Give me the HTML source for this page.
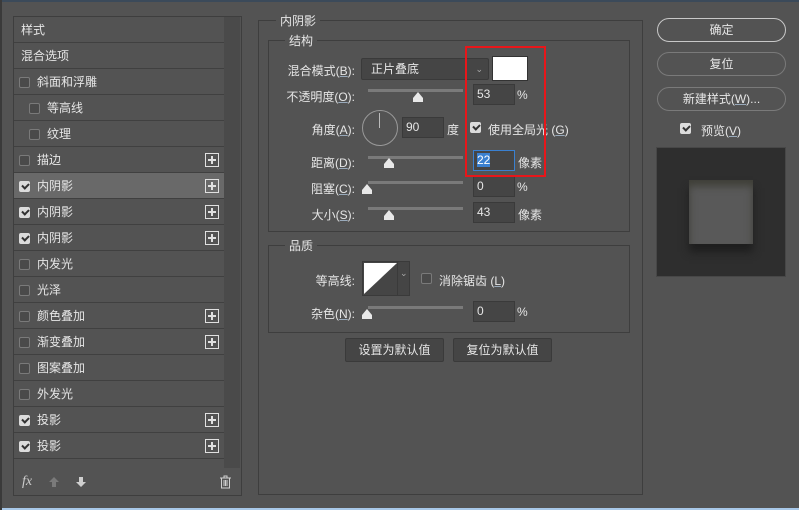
<!DOCTYPE html>
<html><head><meta charset="utf-8"><style>
*{margin:0;padding:0;box-sizing:border-box}
body{width:799px;height:510px;background:#535353;position:relative;overflow:hidden;font-family:"Liberation Sans","Noto Sans CJK SC",sans-serif;font-size:12px;color:#e6e6e6}
.a{position:absolute}
u{text-decoration-thickness:1px;text-decoration-color:#9ab}
.row{position:absolute;left:14px;width:210px;height:26px;border-bottom:1px solid #404040;line-height:27px}
.cb{position:absolute;top:8px;width:11px;height:11px;border:1px solid #7a7a7a;border-radius:2px;background:#4a4a4a}
.ck{background:#dcdcdc;border-color:#dcdcdc}
.ck::after{content:"";position:absolute;left:2px;top:1px;width:5px;height:3px;border-left:2px solid #333;border-bottom:2px solid #333;transform:rotate(-45deg)}
.plus{position:absolute;right:5px;top:6px;width:14px;height:14px;border:1px solid #e0e0e0}
.plus::before{content:"";position:absolute;left:2px;top:5px;width:8px;height:2px;background:#e0e0e0}
.plus::after{content:"";position:absolute;left:5px;top:2px;width:2px;height:8px;background:#e0e0e0}
.box{position:absolute;border:1px solid #3e3e3e}
.lbl{position:absolute;text-align:right;width:100px}
.inp{position:absolute;width:42px;height:21px;background:#454545;border:1px solid #3a3a3a;padding-left:3px;line-height:19px}
.track{position:absolute;height:3px;background:#7a7a7a;width:95px}
.thumb{position:absolute;width:0;height:0;border-left:5px solid transparent;border-right:5px solid transparent;border-bottom:6px solid #e8e8e8}
.thumb::after{content:"";position:absolute;left:-5px;top:6px;width:10px;height:4px;background:#e8e8e8}
.btn{position:absolute;left:657px;width:129px;height:24px;border:1px solid #8a8a8a;border-radius:12px;text-align:center;line-height:22px}
.btn2{position:absolute;height:24px;background:#454545;border:1px solid #3a3a3a;border-radius:2px;text-align:center;line-height:22px}
</style></head><body>
<div class="a" style="left:0;top:0;width:799px;height:2px;background:#3b4a5a"></div>
<div class="a" style="left:0;bottom:0;width:799px;height:2px;background:#a8c8e8"></div>
<div class="a" style="left:0;top:0;width:2px;height:510px;background:#3a3a3a"></div>

<div class="box" style="left:13px;top:16px;width:229px;height:480px"></div>
<div class="a" style="left:224px;top:17px;width:16px;height:451px;background:#4a4a4a"></div>

<div class="row" style="top:17px"><span style="margin-left:7px">样式</span></div>
<div class="row" style="top:43px"><span style="margin-left:7px">混合选项</span></div>
<div class="row" style="top:69px"><div class="cb" style="left:5px"></div><span style="margin-left:23px">斜面和浮雕</span></div>
<div class="row" style="top:95px"><div class="cb" style="left:15px"></div><span style="margin-left:33px">等高线</span></div>
<div class="row" style="top:121px"><div class="cb" style="left:15px"></div><span style="margin-left:33px">纹理</span></div>
<div class="row" style="top:147px"><div class="cb" style="left:5px"></div><span style="margin-left:23px">描边</span><div class="plus"></div></div>
<div class="row" style="top:173px;background:#696969"><div class="cb ck" style="left:5px"></div><span style="margin-left:23px">内阴影</span><div class="plus"></div></div>
<div class="row" style="top:199px"><div class="cb ck" style="left:5px"></div><span style="margin-left:23px">内阴影</span><div class="plus"></div></div>
<div class="row" style="top:225px"><div class="cb ck" style="left:5px"></div><span style="margin-left:23px">内阴影</span><div class="plus"></div></div>
<div class="row" style="top:251px"><div class="cb" style="left:5px"></div><span style="margin-left:23px">内发光</span></div>
<div class="row" style="top:277px"><div class="cb" style="left:5px"></div><span style="margin-left:23px">光泽</span></div>
<div class="row" style="top:303px"><div class="cb" style="left:5px"></div><span style="margin-left:23px">颜色叠加</span><div class="plus"></div></div>
<div class="row" style="top:329px"><div class="cb" style="left:5px"></div><span style="margin-left:23px">渐变叠加</span><div class="plus"></div></div>
<div class="row" style="top:355px"><div class="cb" style="left:5px"></div><span style="margin-left:23px">图案叠加</span></div>
<div class="row" style="top:381px"><div class="cb" style="left:5px"></div><span style="margin-left:23px">外发光</span></div>
<div class="row" style="top:407px"><div class="cb ck" style="left:5px"></div><span style="margin-left:23px">投影</span><div class="plus"></div></div>
<div class="row" style="top:433px"><div class="cb ck" style="left:5px"></div><span style="margin-left:23px">投影</span><div class="plus"></div></div>

<div class="a" style="left:22px;top:474px;font-style:italic;font-family:'Liberation Serif',serif;font-size:14px;color:#ccc">fx</div>
<svg class="a" style="left:48px;top:476px" width="12" height="12"><path d="M6 1L11 6H8V11H4V6H1Z" fill="#7a7a7a"/></svg>
<svg class="a" style="left:75px;top:476px" width="12" height="12"><path d="M6 11L11 6H8V1H4V6H1Z" fill="#cfcfcf"/></svg>
<svg class="a" style="left:219px;top:475px" width="13" height="14"><path d="M1 3H12M5 3V1H8V3M2.5 3.5V13H10.5V3.5M5 5V11M6.5 5V11M8 5V11" stroke="#d0d0d0" fill="none"/></svg>

<div class="box" style="left:258px;top:20px;width:385px;height:475px"></div>
<div class="a" style="left:276px;top:12px;background:#535353;padding:0 4px">内阴影</div>
<div class="box" style="left:268px;top:40px;width:362px;height:192px"></div>
<div class="a" style="left:285px;top:32px;background:#535353;padding:0 4px">结构</div>

<div class="lbl" style="left:255px;top:62px">混合模式(<u>B</u>):</div>
<div class="a" style="left:361px;top:58px;width:128px;height:22px;background:#454545;border:1px solid #3a3a3a;border-radius:2px;line-height:20px;padding-left:9px">正片叠底<span style="position:absolute;right:5px;color:#aaa;font-size:9px">&#8964;</span></div>
<div class="a" style="left:492px;top:56px;width:36px;height:25px;background:#fff;border:1px solid #333"></div>

<div class="lbl" style="left:255px;top:88px">不透明度(<u>O</u>):</div>
<div class="track" style="left:368px;top:89px;width:95px"></div><div class="thumb" style="left:413px;top:92px"></div>
<div class="inp" style="left:473px;top:84px">53</div><div class="a" style="left:517px;top:88px">%</div>

<div class="lbl" style="left:255px;top:121px">角度(<u>A</u>):</div>
<div class="a" style="left:362px;top:110px;width:36px;height:36px;border:1px solid #999;border-radius:50%"></div>
<div class="a" style="left:379px;top:113px;width:1px;height:15px;background:#bbb"></div>
<div class="inp" style="left:402px;top:117px">90</div><div class="a" style="left:447px;top:121px">度</div>
<div class="cb ck" style="left:470px;top:122px"></div><div class="a" style="left:488px;top:121px">使用全局光 (<u>G</u>)</div>

<div class="lbl" style="left:255px;top:154px">距离(<u>D</u>):</div>
<div class="track" style="left:368px;top:156px"></div><div class="thumb" style="left:384px;top:158px"></div>
<div class="inp" style="left:473px;top:150px;border-color:#3a80d0"><span style="background:#3a80d0;color:#fff">22</span></div><div class="a" style="left:518px;top:154px">像素</div>

<div class="lbl" style="left:255px;top:180px">阻塞(<u>C</u>):</div>
<div class="track" style="left:368px;top:181px"></div><div class="thumb" style="left:362px;top:184px"></div>
<div class="inp" style="left:473px;top:176px">0</div><div class="a" style="left:517px;top:180px">%</div>

<div class="lbl" style="left:255px;top:206px">大小(<u>S</u>):</div>
<div class="track" style="left:368px;top:207px"></div><div class="thumb" style="left:384px;top:210px"></div>
<div class="inp" style="left:473px;top:202px">43</div><div class="a" style="left:518px;top:206px">像素</div>

<div class="a" style="left:465px;top:46px;width:81px;height:131px;border:2px solid #e8161a"></div>

<div class="box" style="left:268px;top:245px;width:362px;height:88px"></div>
<div class="a" style="left:285px;top:237px;background:#535353;padding:0 4px">品质</div>
<div class="lbl" style="left:255px;top:272px">等高线:</div>
<div class="a" style="left:362px;top:261px;width:48px;height:35px;border:1px solid #3a3a3a;background:#454545"></div>
<svg class="a" style="left:364px;top:263px" width="33" height="31"><path d="M0 0H33L0 31Z" fill="#fff"/></svg>
<div class="a" style="left:397px;top:262px;width:1px;height:33px;background:#3a3a3a"></div>
<div class="a" style="left:400px;top:268px;color:#aaa;font-size:9px">&#8964;</div>
<div class="cb" style="left:421px;top:273px"></div><div class="a" style="left:439px;top:272px">消除锯齿 (<u>L</u>)</div>
<div class="lbl" style="left:255px;top:305px">杂色(<u>N</u>):</div>
<div class="track" style="left:368px;top:306px"></div><div class="thumb" style="left:362px;top:309px"></div>
<div class="inp" style="left:473px;top:301px">0</div><div class="a" style="left:517px;top:305px">%</div>

<div class="btn2" style="left:345px;top:338px;width:99px">设置为默认值</div>
<div class="btn2" style="left:453px;top:338px;width:99px">复位为默认值</div>

<div class="btn" style="top:18px;border-color:#c8c8c8">确定</div>
<div class="btn" style="top:52px;border-color:#7a7a7a">复位</div>
<div class="btn" style="top:87px;border-color:#7a7a7a">新建样式(<u>W</u>)...</div>
<div class="cb ck" style="left:680px;top:123px"></div><div class="a" style="left:701px;top:122px">预览(<u>V</u>)</div>
<div class="a" style="left:656px;top:147px;width:130px;height:130px;background:#2e2e2e;border:1px solid #474747"></div>
<div class="a" style="left:689px;top:180px;width:64px;height:64px;background:#595959;box-shadow:inset 0 6px 8px #3f3f38,0 8px 8px #1e1e1e"></div>
</body></html>
